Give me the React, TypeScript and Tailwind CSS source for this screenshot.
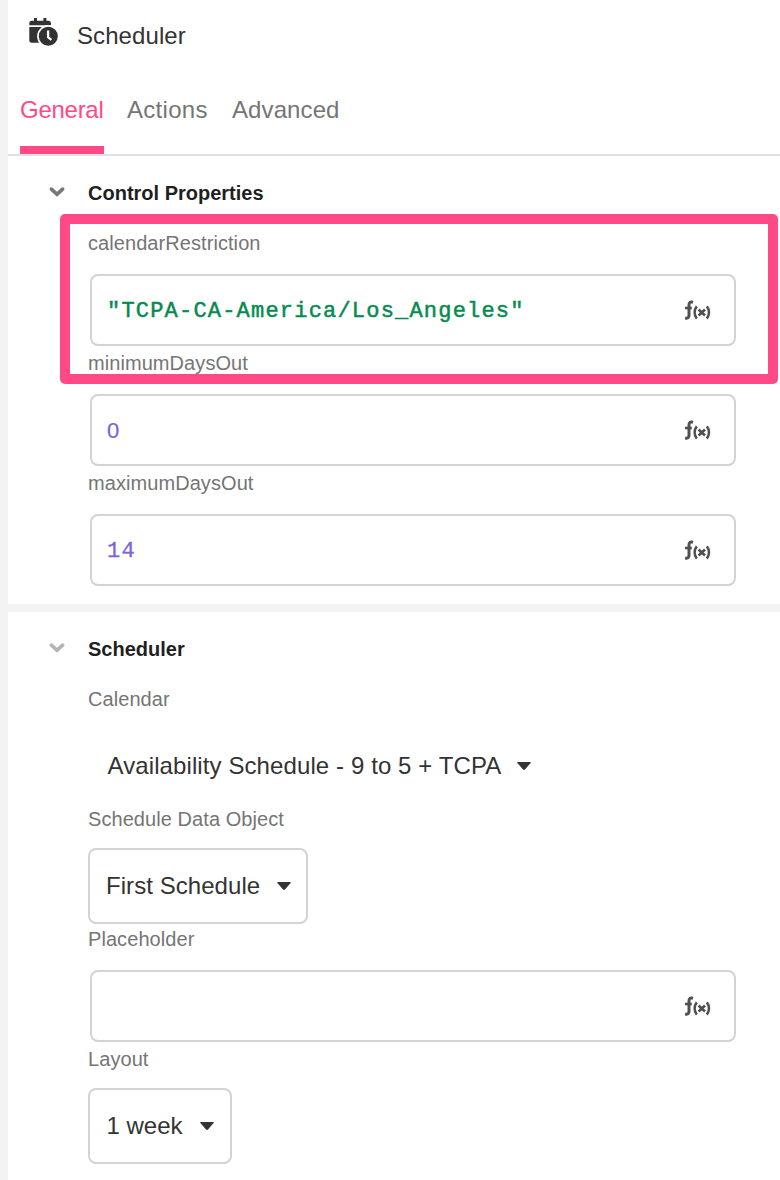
import React from "react";

function Fx() {
  return (
    <svg className="mt-[2px] block shrink-0" width="28" height="24" viewBox="0 0 28 24" fill="none" stroke="#505050" strokeWidth="3">
      <path d="M10 3.200C7 2.400 6 3.400 6 6v10c0 2.600-.8 3.600-3.900 3" />
      <path d="M2 9h6.800" strokeWidth="2.600" />
      <path d="M13.800 7.400c-2.900 3.500-2.900 8.700 0 12.200M23.800 7.400c2.900 3.500 2.900 8.700 0 12.200" strokeWidth="2.500" />
      <path d="M15.600 10.500l6.400 6M22 10.500l-6.400 6" strokeWidth="2.700" />
    </svg>
  );
}

function Chevron({ color }: { color: string }) {
  return (
    <svg className="mt-[-2px] mr-[22px] block shrink-0" width="18" height="14" viewBox="0 0 18 14" fill="none" stroke={color} strokeWidth="3.700" strokeLinecap="round" strokeLinejoin="miter">
      <path d="M3.400 4.100l5.600 5.200 5.600-5.200" />
    </svg>
  );
}

function Caret() {
  return (
    <svg className="block shrink-0" width="16" height="10" viewBox="0 0 16 10" fill="#333">
      <path d="M1.8 1h12.4q1.2 0 .4 1L9 8.6q-1 .9-2 0L1.400 2q-.8-1 .4-1z" />
    </svg>
  );
}

function Label({ children }: { children: string }) {
  return (
    <div className="h-[30px] text-[20px] leading-[30px] tracking-[0.07px] text-[#757575]">
      <span className="inline-block whitespace-nowrap">{children}</span>
    </div>
  );
}

function Field({ label, children }: { label: string; children?: React.ReactNode }) {
  return (
    <div className="h-[120px]">
      <Label>{label}</Label>
      <div className="mt-4 ml-0.5 flex h-[72px] w-[646px] items-center justify-between rounded-lg border-2 border-[#d3d3d3] pr-[23px] pl-[15px]">
        <div className="pt-[3px] font-['Liberation_Mono',monospace] text-[22px] leading-[30px] tracking-[1.2px]">{children}</div>
        <Fx />
      </div>
    </div>
  );
}

function Heading({ children, color }: { children: string; color: string }) {
  return (
    <div className="flex h-[30px] items-center pl-[40px]">
      <Chevron color={color} />
      <h2 className="text-[20px] font-bold leading-[30px] text-[#1f1f1f]">{children}</h2>
    </div>
  );
}

export default function App() {
  return (
    <div className="h-[1180px] w-[780px] overflow-hidden bg-[#f3f3f3] pl-2 font-['Liberation_Sans',Arial,sans-serif]">
      <header className="h-[156px] border-b-2 border-[#e2e2e2] bg-white">
        <div className="flex h-[70px] items-center pl-5">
          <svg className="mt-[-6px] block shrink-0" width="32" height="32" viewBox="0 0 32 32">
            <g fill="#333">
              <path d="M1.300 9.200V7.200Q1.300 4.700 3.800 4.700H6V2h3v2.700h6.400V2h3v2.700h2.300Q23 4.700 23 7.200v2z" />
              <path d="M1.300 11H23v15.700H3.800q-2.500 0-2.500-2.500z" />
            </g>
            <circle cx="20.300" cy="20.300" r="11.200" fill="#fff" />
            <circle cx="20.300" cy="20.300" r="9.500" fill="#333" />
            <path d="M20.100 14.600v6.700l3.300 2.500" fill="none" stroke="#fff" strokeWidth="2.300" />
          </svg>
          <h1 className="mt-[2px] ml-[17px] text-[24px] tracking-[0.08px] text-[#333]">Scheduler</h1>
        </div>
        <nav className="ml-3 flex h-[84px] text-[24px] leading-[80px] text-[#757575]">
          <button className="flex h-[84px] w-[84px] border-b-8 border-[#ff4a87] tracking-[-0.27px] text-[#ff4a87]">General</button>
          <button className="ml-[23px] flex h-[84px] w-[82px] tracking-[0.3px]">Actions</button>
          <button className="ml-[23px] flex h-[84px] tracking-[0.1px]">Advanced</button>
        </nav>
      </header>

      <section className="relative h-[448px] bg-white pt-[22px]">
        <Heading color="#777">Control Properties</Heading>
        <div className="pt-5 pl-20">
          <Field label="calendarRestriction">
            <span className="text-[#058b50] [-webkit-text-stroke:0.5px_#058b50]">"TCPA-CA-America/Los_Angeles"</span>
          </Field>
          <Field label="minimumDaysOut">
            <span className="font-['Liberation_Sans',sans-serif] text-[22px] text-[#7965d9] [-webkit-text-stroke:0.2px_#7965d9]">0</span>
          </Field>
          <Field label="maximumDaysOut">
            <span className="text-[#7965d9] [-webkit-text-stroke:0.3px_#7965d9]">14</span>
          </Field>
        </div>
        <div className="pointer-events-none absolute top-[58px] left-[52px] h-[170px] w-[718px] rounded-[5px] bg-[#ff4a87] [clip-path:polygon(evenodd,0_0,100%_0,100%_100%,0_100%,0_0,10px_10px,708px_10px,708px_160px,10px_160px,10px_10px)]" />
      </section>

      <section className="mt-2 h-[568px] bg-white pt-[22px]">
        <Heading color="#b4b4b4">Scheduler</Heading>
        <div className="pt-5 pl-20">
          <div className="h-[120px]">
            <Label>Calendar</Label>
            <button className="mt-[16px] ml-[19.5px] flex h-[72px] items-center gap-[15px] text-[24px] tracking-[0.1px] text-[#333]">Availability Schedule - 9 to 5 + TCPA<Caret /></button>
          </div>
          <div className="h-[120px]">
            <Label>Schedule Data Object</Label>
            <button className="mt-[14px] flex h-[76px] w-[220px] items-center justify-between rounded-lg border-2 border-[#d3d3d3] pr-[14.5px] pl-4 text-[24px] tracking-[0.06px] text-[#333]">First Schedule<Caret /></button>
          </div>
          <Field label="Placeholder" />
          <div className="h-[120px]">
            <Label>Layout</Label>
            <button className="mt-[14px] flex h-[76px] w-[144px] items-center justify-between rounded-lg border-2 border-[#d3d3d3] pr-[15.5px] pl-[16.5px] text-[24px] text-[#333]">1 week<Caret /></button>
          </div>
        </div>
      </section>
    </div>
  );
}
